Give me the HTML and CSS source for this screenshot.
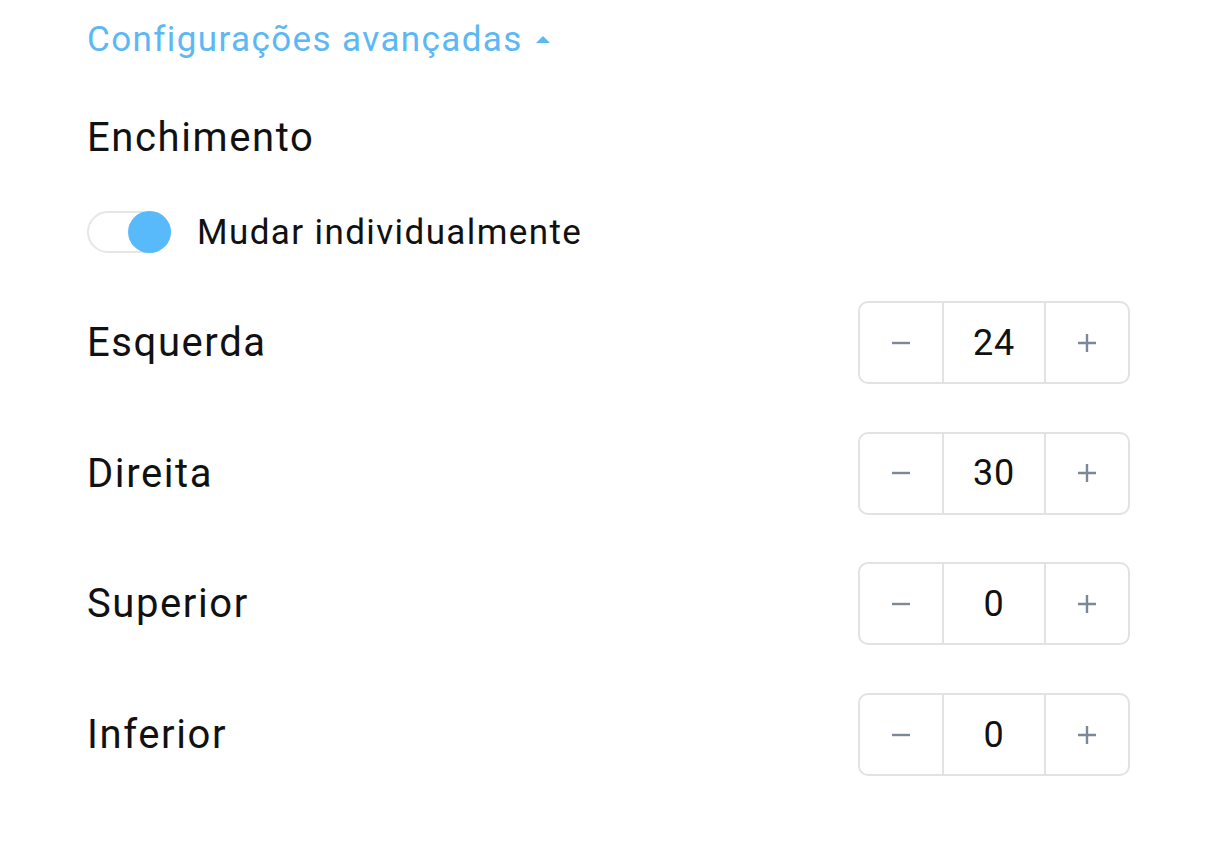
FILE: index.html
```html
<!DOCTYPE html>
<html lang="pt">
<head>
<meta charset="utf-8">
<link rel="stylesheet" href="styles.css">
</head>
<body>
<div class="panel">
  <div class="advanced">
    <span>Configurações avançadas</span>
    <svg class="caret" width="14" height="7" viewBox="0 0 14 7"><path d="M0 7 L7 0 L14 7 Z" fill="#5cb8f4"/></svg>
  </div>
  <div class="section-title">Enchimento</div>
  <div class="toggle-row">
    <div class="toggle"><div class="knob"></div></div>
    <span class="toggle-label">Mudar individualmente</span>
  </div>
  <div class="rows">
    <div class="row">
      <span class="label">Esquerda</span>
      <div class="stepper">
        <div class="btn"><svg width="20" height="20" viewBox="0 0 20 20"><path d="M1 10 H19" stroke="#7a8899" stroke-width="2.4"/></svg></div>
        <div class="value">24</div>
        <div class="btn"><svg width="20" height="20" viewBox="0 0 20 20"><path d="M1 10 H19 M10 1 V19" stroke="#7a8899" stroke-width="2.4"/></svg></div>
      </div>
    </div>
    <div class="row">
      <span class="label">Direita</span>
      <div class="stepper">
        <div class="btn"><svg width="20" height="20" viewBox="0 0 20 20"><path d="M1 10 H19" stroke="#7a8899" stroke-width="2.4"/></svg></div>
        <div class="value">30</div>
        <div class="btn"><svg width="20" height="20" viewBox="0 0 20 20"><path d="M1 10 H19 M10 1 V19" stroke="#7a8899" stroke-width="2.4"/></svg></div>
      </div>
    </div>
    <div class="row">
      <span class="label">Superior</span>
      <div class="stepper">
        <div class="btn"><svg width="20" height="20" viewBox="0 0 20 20"><path d="M1 10 H19" stroke="#7a8899" stroke-width="2.4"/></svg></div>
        <div class="value">0</div>
        <div class="btn"><svg width="20" height="20" viewBox="0 0 20 20"><path d="M1 10 H19 M10 1 V19" stroke="#7a8899" stroke-width="2.4"/></svg></div>
      </div>
    </div>
    <div class="row">
      <span class="label">Inferior</span>
      <div class="stepper">
        <div class="btn"><svg width="20" height="20" viewBox="0 0 20 20"><path d="M1 10 H19" stroke="#7a8899" stroke-width="2.4"/></svg></div>
        <div class="value">0</div>
        <div class="btn"><svg width="20" height="20" viewBox="0 0 20 20"><path d="M1 10 H19 M10 1 V19" stroke="#7a8899" stroke-width="2.4"/></svg></div>
      </div>
    </div>
  </div>
</div>
</body>
</html>
```
FILE: styles.css
```css
html, body {
  margin: 0;
  background: #ffffff;
  font-family: Roboto, "Noto Sans", sans-serif;
  color: #111111;
}
.panel {
  padding: 16px 82px 0 87px;
}
.advanced {
  display: flex;
  align-items: center;
  gap: 13px;
  font-size: 35px;
  line-height: 48px;
  letter-spacing: 0.04em;
  color: #5cb8f4;
}
.caret {
  margin-top: -2px;
}
.section-title {
  margin-top: 50px;
  font-size: 40px;
  line-height: 48px;
  letter-spacing: 0.04em;
}
.toggle-row {
  margin-top: 46px;
  display: flex;
  align-items: center;
  height: 48px;
  gap: 26px;
}
.toggle {
  position: relative;
  width: 84px;
  height: 42px;
  box-sizing: border-box;
  border: 2px solid #e6e6e6;
  border-radius: 21px;
  background: #fff;
}
.knob {
  position: absolute;
  right: -2px;
  top: -2px;
  width: 43px;
  height: 42px;
  border-radius: 50%;
  background: #58b9fb;
}
.toggle-label {
  font-size: 35px;
  letter-spacing: 0.04em;
}
.rows {
  margin-top: 45px;
  display: flex;
  flex-direction: column;
  gap: 47.7px;
}
.row {
  display: flex;
  align-items: center;
  justify-content: space-between;
  height: 83px;
}
.label {
  font-size: 40px;
  letter-spacing: 0.04em;
}
.stepper {
  display: flex;
  width: 272px;
  height: 83px;
  box-sizing: border-box;
  border: 2px solid #e2e2e2;
  border-radius: 10px;
}
.btn, .value {
  display: flex;
  align-items: center;
  justify-content: center;
}
.btn {
  width: 84px;
}
.value {
  width: 102px;
  border-left: 2px solid #e2e2e2;
  border-right: 2px solid #e2e2e2;
  font-size: 36px;
  letter-spacing: 0.02em;
}
```
